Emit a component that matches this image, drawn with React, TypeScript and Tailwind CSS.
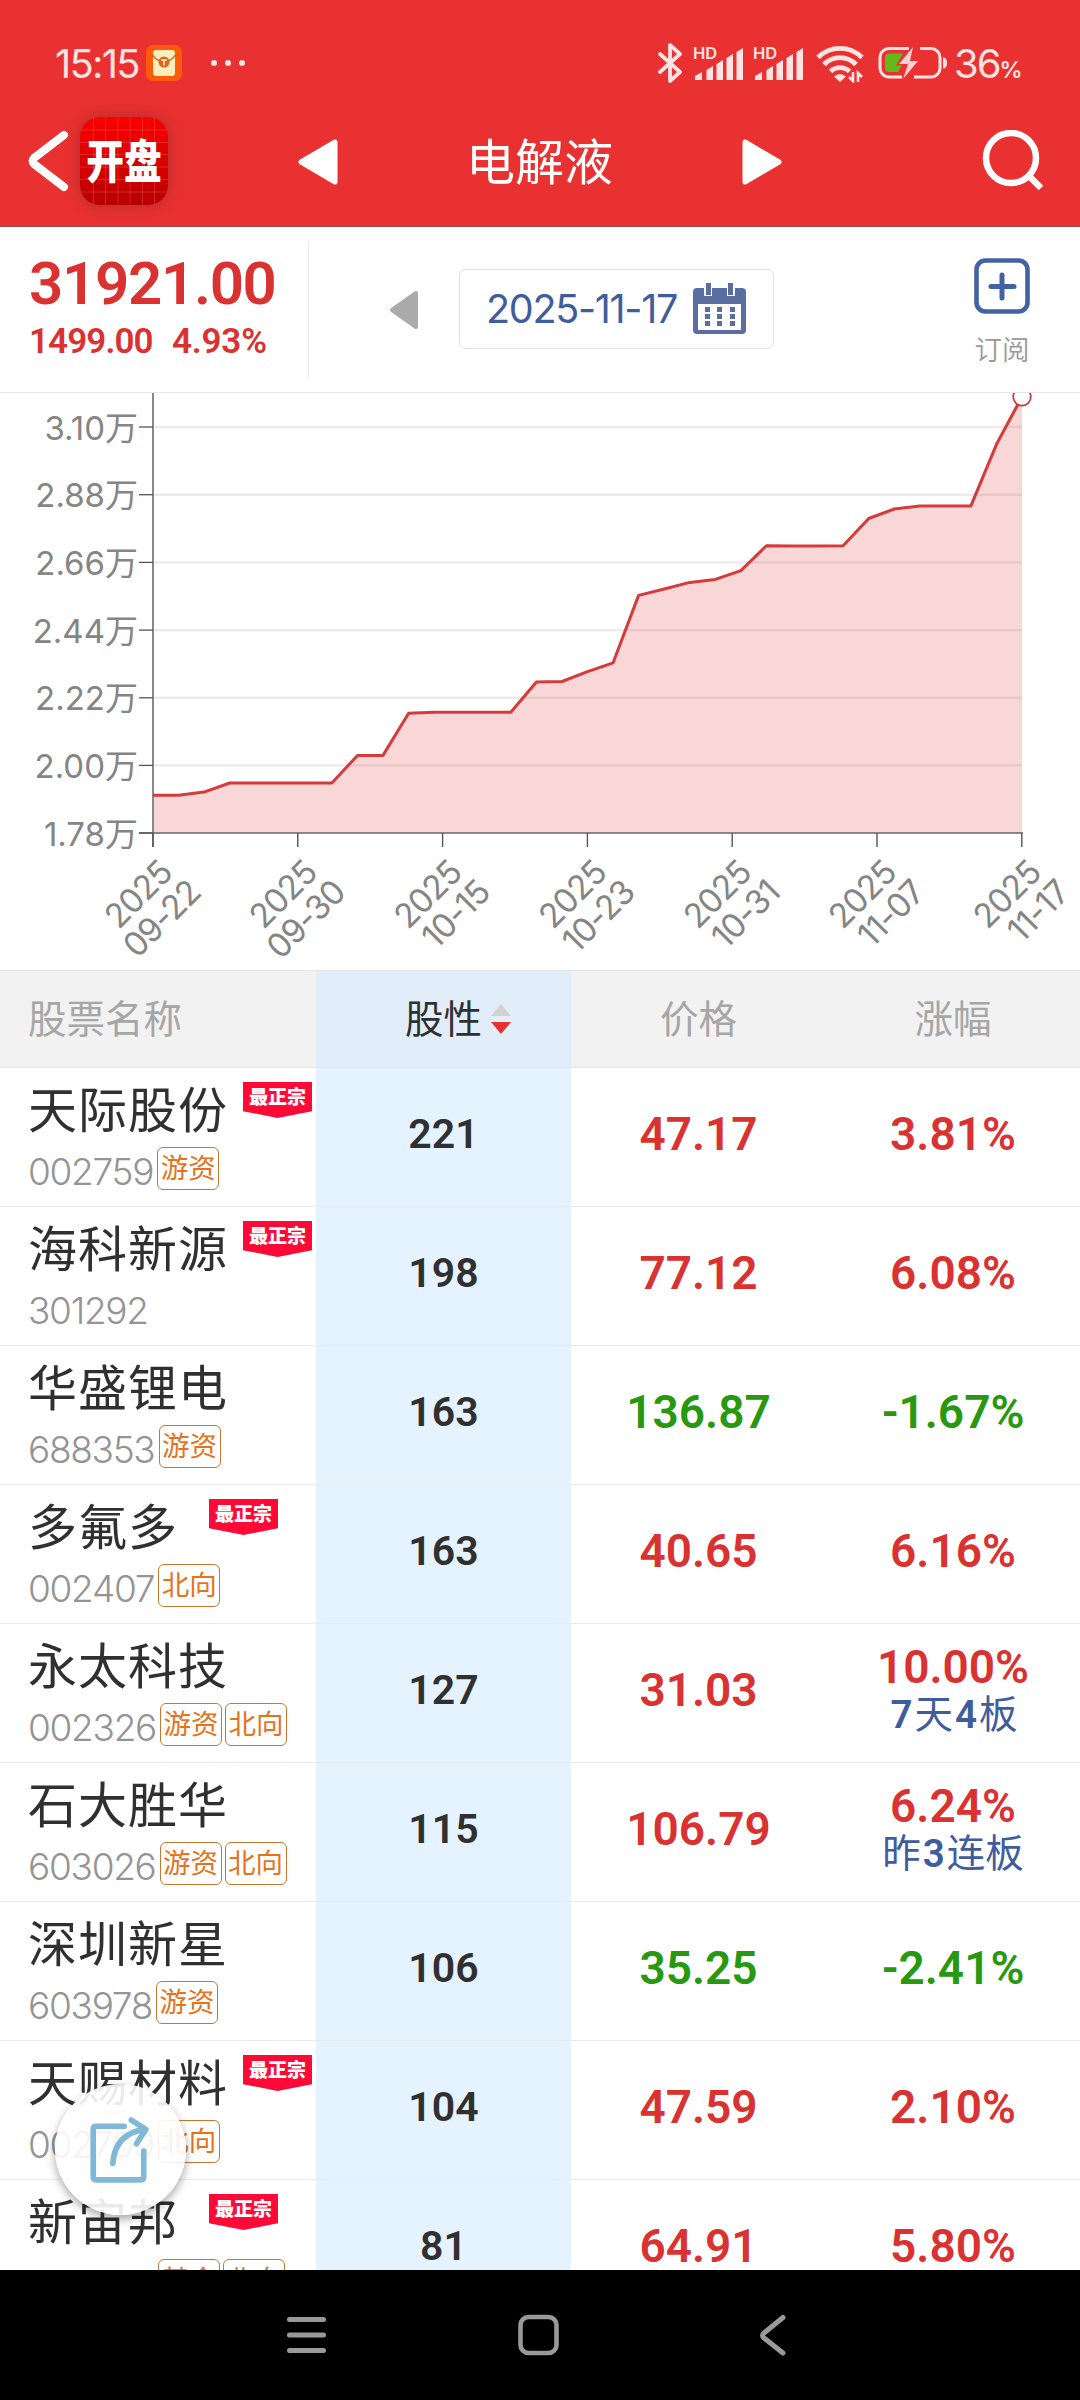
const CJK = "font-['Inter','Noto_Sans_CJK_SC',sans-serif]";
const DIN = "font-['Roboto','Noto_Sans_CJK_SC',sans-serif]";

type Row = {
  name: string;
  code: string;
  tags: string[];
  top?: boolean;
  heat: string;
  price: string;
  change: string;
  note?: string;
};

const rows: Row[] = [
  { name: '天际股份', code: '002759', tags: ['游资'], top: true, heat: '221', price: '47.17', change: '3.81%' },
  { name: '海科新源', code: '301292', tags: [], top: true, heat: '198', price: '77.12', change: '6.08%' },
  { name: '华盛锂电', code: '688353', tags: ['游资'], heat: '163', price: '136.87', change: '-1.67%' },
  { name: '多氟多', code: '002407', tags: ['北向'], top: true, heat: '163', price: '40.65', change: '6.16%' },
  { name: '永太科技', code: '002326', tags: ['游资', '北向'], heat: '127', price: '31.03', change: '10.00%', note: '7天4板' },
  { name: '石大胜华', code: '603026', tags: ['游资', '北向'], heat: '115', price: '106.79', change: '6.24%', note: '昨3连板' },
  { name: '深圳新星', code: '603978', tags: ['游资'], heat: '106', price: '35.25', change: '-2.41%' },
  { name: '天赐材料', code: '002709', tags: ['北向'], top: true, heat: '104', price: '47.59', change: '2.10%' },
  { name: '新宙邦', code: '300037', tags: ['基金', '北向'], top: true, heat: '81', price: '64.91', change: '5.80%' },
];

const series = [
  795.2, 795.2, 792.1, 783, 783, 783, 783, 783, 755.4, 755.4, 713.3, 712.2, 712.2, 712.2, 712.2, 682, 681.5, 671.6,
  662.8, 595.4, 589, 582.4, 579.4, 570.6, 545.7, 545.9, 545.9, 545.7, 518.5, 509, 505.9, 505.9, 505.9, 444.3, 396.8,
];
const yTicks: [string, number][] = [
  ['3.10万', 427], ['2.88万', 494.7], ['2.66万', 562.4], ['2.44万', 630.1], ['2.22万', 697.8], ['2.00万', 765.4], ['1.78万', 833],
];
const xTicks = ['09-22', '09-30', '10-15', '10-23', '10-31', '11-07', '11-17'];

function Chart() {
  const pts = series.map((y, i) => `${(153 + i * 25.56).toFixed(1)},${y}`).join(' ');
  return (
    <svg className="block h-[577px] w-full shrink-0" viewBox="0 393 1080 577">
      {yTicks.slice(0, 6).map(([t, y]) => (
        <line key={t} x1="153" x2="1022" y1={y} y2={y} stroke="#ebebeb" strokeWidth="2.4" />
      ))}
      <polygon points={`153,833 ${pts} 1022,833`} fill="#e33535" fillOpacity="0.2" />
      <line x1="153" x2="153" y1="393" y2="847" stroke="#888" strokeWidth="2" />
      <line x1="139" x2="1023" y1="833" y2="833" stroke="#666" strokeWidth="1.4" />
      {yTicks.map(([t, y]) => (
        <g key={t}>
          <line x1="139" x2="153" y1={y} y2={y} stroke="#555" strokeWidth="1.3" />
          <text x="138" y={y + 12.5} textAnchor="end" className={`${CJK} fill-[#858585] text-[33px] font-[370]`}>{t}</text>
        </g>
      ))}
      {xTicks.map((t, i) => (
        <g key={t}>
          <line x1={153 + i * 144.8} x2={153 + i * 144.8} y1="833" y2="847" stroke="#555" strokeWidth="1.4" />
          <g transform={`translate(${155 + i * 144.8} 833) rotate(-45)`} className={`${CJK} fill-[#858585] text-[33.5px] font-[370] tracking-[-1px]`}>
            <text x="-16" y="43" textAnchor="end">2025</text>
            <text x="-10" y="77" textAnchor="end">{t}</text>
          </g>
        </g>
      ))}
      <polyline points={pts} fill="none" stroke="#d63a3a" strokeWidth="3" strokeLinejoin="round" />
      <circle cx="1022" cy="396.8" r="8.8" fill="#fff" stroke="#d0393c" strokeWidth="1.8" />
    </svg>
  );
}

function Signal() {
  return (
    <svg className="h-[40px] w-[52px] overflow-visible" viewBox="0 0 52 40">
      <text x="0" y="15.5" className="fill-[#ffe3e3] font-['Inter',sans-serif] text-[16.5px] font-semibold">HD</text>
      <g fill="#ffe3e3">
        <path d="M2 37v-4l7-4v8z" />
        <path d="M13.500 37V27l6.500-4v14z" />
        <path d="M23.500 37V21l6.500-4v20z" />
        <path d="M33.500 37V15l6.500-4v26z" />
        <path d="M43.500 37V9l6.500-4v32z" />
      </g>
    </svg>
  );
}

function StatusBar() {
  return (
    <div className="flex h-[96px] items-end justify-between pr-[62px] pl-[55px]">
      <div className="flex h-[66px] items-center">
        <span className={`${CJK} mt-[2px] w-[91px] text-[40px] tracking-[-1.8px] text-[#ffe3e3]`}>15:15</span>
        <svg className="h-[36px] w-[36px]" viewBox="0 0 36 36">
          <rect width="36" height="36" rx="7" fill="#ff5a0a" />
          <rect x="7" y="5" width="22" height="26" rx="3" fill="#ffeebc" />
          <path d="M7 10q2 5 11 7.500 9-2.500 11-7.500" fill="none" stroke="#c2742b" strokeWidth="1.500" />
          <circle cx="18" cy="17" r="5.500" fill="#e0641b" />
          <path d="M15 15h6M18 15v5.500" stroke="#ffeebc" strokeWidth="1.500" />
        </svg>
        <div className="ml-[29px] flex gap-[8px]">
          <i className="size-[6px] rounded-full bg-[#ffe3e3]" />
          <i className="size-[6px] rounded-full bg-[#ffe3e3]" />
          <i className="size-[6px] rounded-full bg-[#ffe3e3]" />
        </div>
      </div>
      <div className="flex h-[66px] items-center">
        <svg className="h-[40px] w-[26px]" viewBox="0 0 26 40">
          <path d="M3 11l20 18-10 9V2l10 9L3 29" fill="none" stroke="#ffe3e3" strokeWidth="3.800" strokeLinejoin="round" strokeLinecap="round" />
        </svg>
        <span className="ml-[10px] flex"><Signal /></span>
        <span className="ml-[8px] flex"><Signal /></span>
        <svg className="ml-[11px] h-[40px] w-[48px]" viewBox="0 0 48 40">
          <g fill="none" stroke="#ffe3e3" strokeWidth="4.800">
            <path d="M2 14.500a31 31 0 0 1 44 0" />
            <path d="M8 21.500a22 22 0 0 1 32 0" />
            <path d="M14.500 28.500a13.500 13.500 0 0 1 19 0" />
          </g>
          <path d="M18 33.500q6-5 12 0l-6 5.500z" fill="#ffe3e3" />
          <path d="M37 29v9l-4-4M42 39v-9l4 4" fill="none" stroke="#ffe3e3" strokeWidth="2.600" />
        </svg>
        <svg className="ml-[14px] h-[40px] w-[70px]" viewBox="0 0 70 40">
          <path d="M31 5.500H11A9 9 0 0 0 2 14v11a9 9 0 0 0 9 9h13M42 5.500h11a9 9 0 0 1 9 9V25a9 9 0 0 1-9 9H36" fill="none" stroke="#ffe3e3" strokeWidth="3" />
          <path d="M11 10.500h14l-7 12h6l-4 6.500H11a4 4 0 0 1-4-4V14.500a4 4 0 0 1 4-4z" fill="#63b81c" />
          <path d="M35 4L21 21h9l-5 15 15-18h-8z" fill="#ffd0d0" />
          <path d="M65 14.500q4 0 4 5.500t-4 5.500z" fill="#ffe3e3" />
        </svg>
        <span className={`${CJK} mt-[2px] ml-[6px] w-[64px] text-[40px] tracking-[-2px] whitespace-nowrap text-[#ffe3e3]`}>
          36<span className="text-[23px] font-semibold">%</span>
        </span>
      </div>
    </div>
  );
}

function TitleBar() {
  return (
    <div className="flex h-[130px] items-start">
      <svg className="mt-[32px] ml-[26px] h-[66px] w-[46px]" viewBox="0 0 46 66">
        <path d="M38 7L8 30q-3 3 0 6l30 23" fill="none" stroke="#fff" strokeWidth="8" strokeLinecap="round" strokeLinejoin="round" />
      </svg>
      <div className="relative mt-[21px] ml-[8px] flex h-[88px] w-[88px] items-center justify-center overflow-hidden rounded-[20px] bg-linear-to-b from-[#fb0000] to-[#b80000] shadow-[0_0_14px_rgba(120,40,40,.5)]">
        <svg className="absolute inset-0 size-full" viewBox="0 0 88 88">
          <path d="M13.500 0v88M25.500 0v88M38 0v88M50 0v88M62.500 0v88M74.500 0v88M0 13h88M0 25.500h88M0 37.500h88M0 50h88M0 62.500h88M0 75h88" stroke="#ff8080" strokeOpacity=".28" />
        </svg>
        <span className={`${CJK} relative scale-x-[.82] text-[46px] leading-none font-black whitespace-nowrap text-white`}>开盘</span>
      </div>
      <svg className="mt-[42px] ml-[130px] h-[48px] w-[41px]" viewBox="0 0 41 48">
        <path d="M3 24L37 4v40z" fill="#fff" stroke="#fff" strokeWidth="5" strokeLinejoin="round" />
      </svg>
      <span className={`${CJK} mt-[34px] ml-[127px] w-[149px] text-[49px] leading-[66px] font-[370] whitespace-nowrap text-white`}>电解液</span>
      <svg className="mt-[42px] ml-[126px] h-[48px] w-[41px]" viewBox="0 0 41 48">
        <path d="M38 24L4 4v40z" fill="#fff" stroke="#fff" strokeWidth="5" strokeLinejoin="round" />
      </svg>
      <svg className="mt-[34px] ml-[200px] h-[62px] w-[64px]" viewBox="0 0 64 62">
        <circle cx="29" cy="28" r="25" fill="none" stroke="#fff" strokeWidth="6.500" />
        <path d="M46 45l13 13" stroke="#fff" strokeWidth="6.500" />
      </svg>
    </div>
  );
}

function InfoBar() {
  return (
    <div className="flex h-[166px] shrink-0 border-b border-[#e6e6e6] bg-white">
      <div className={`${DIN} mt-[14px] h-[137px] w-[309px] border-r border-[#ebebeb] pl-[29px] font-semibold whitespace-nowrap text-[#da3131]`}>
        <div className="mt-[11px] text-[60px] leading-[64px] tracking-[-1.300px]">31921.00</div>
        <div className="mt-[6px] flex text-[35px] leading-[40px] tracking-[-.9px]">
          <span className="w-[143px]">1499.00</span>
          <span className="tracking-[-.2px]">4.93%</span>
        </div>
      </div>
      <svg className="mt-[63px] ml-[80px] h-[40px] w-[30px]" viewBox="0 0 30 40">
        <path d="M3 20L27 3v34z" fill="#ababab" stroke="#ababab" strokeWidth="4" strokeLinejoin="round" />
      </svg>
      <div className="mt-[42px] ml-[40px] flex h-[80px] w-[315px] items-center rounded-[6px] border border-[#e2e2e2] pl-[26px]">
        <span className={`${CJK} mt-[2px] w-[207px] text-[39.500px] tracking-[-1.300px] whitespace-nowrap text-[#3f5d9d]`}>2025-11-17</span>
        <svg className="mb-[1px] h-[52px] w-[53px]" viewBox="0 0 53 52">
          <path d="M0 9q0-4 4-4h7v8h8V5h15v8h8V5h7q4 0 4 4v38q0 4-4 4H4q-4 0-4-4z" fill="#5b6ea1" />
          <path d="M13 0h5v12h-5zM35 0h5v12h-5z" fill="#5b6ea1" />
          <path d="M5 21h43v26H5z" fill="#fff" />
          <path d="M12 24h5v5h-5zM24 24h5v5h-5zM37 24h5v5h-5zM12 31h5v5h-5zM24 31h5v5h-5zM37 31h5v5h-5zM12 38h5v5h-5zM24 38h5v5h-5zM37 38h5v5h-5z" fill="#5b6ea1" />
        </svg>
      </div>
      <div className="mt-[31px] ml-[200px] flex w-[56px] flex-col items-center">
        <svg className="h-[56px] w-[56px]" viewBox="0 0 56 56">
          <rect x="2.500" y="2.500" width="51" height="51" rx="9" fill="none" stroke="#4362a3" strokeWidth="4.600" />
          <path d="M28 17v23M17 28.500h23" stroke="#4362a3" strokeWidth="5" strokeLinecap="round" />
        </svg>
        <span className={`${CJK} mt-[18px] text-[27.500px] leading-[36px] font-[350] whitespace-nowrap text-[#999]`}>订阅</span>
      </div>
    </div>
  );
}

function TopBadge() {
  return (
    <div className="mt-[14px] flex h-[36px] w-[69px] justify-center bg-[#ff0a37] pt-[5px] [clip-path:polygon(0_0,100%_0,100%_81%,50%_100%,0_81%)]">
      <span className={`${CJK} text-[19px] leading-[22px] font-black whitespace-nowrap text-white`}>最正宗</span>
    </div>
  );
}

function StockRow({ r }: { r: Row }) {
  const tone = r.change.startsWith('-') ? 'text-[#289810]' : 'text-[#da3131]';
  return (
    <div className={`${DIN} grid h-[139px] shrink-0 grid-cols-[316px_255px_255px_254px] border-b border-[#e9eaeb] text-[46px] leading-[50px] font-semibold`}>
      <div className={`${CJK} pl-[28px] font-[370] whitespace-nowrap`}>
        <div className="flex h-[76px] justify-between pr-[4px]">
          <span className="mt-[13px] text-[49px] leading-[60px] tracking-[1px] text-[#303030]">{r.name}</span>
          {r.top && <span className={r.name.length === 3 ? 'mr-[34px]' : ''}><TopBadge /></span>}
        </div>
        <div className="flex h-[50px] items-center">
          <span className="mt-[5px] mr-[4px] text-[37px] font-light tracking-[-1.300px] text-[#949494]">{r.code}</span>
          {r.tags.map((t) => (
            <span key={t} className="mr-[3px] mb-[1px] flex h-[43px] w-[62px] items-center justify-center rounded-[6px] border border-[#c8782e] text-[27.500px] leading-none font-normal text-[#e6721c]">{t}</span>
          ))}
        </div>
      </div>
      <div className="flex items-center justify-center bg-[#e5f2ff] pb-[6px] text-[41px] text-[#303030]">{r.heat}</div>
      <div className={`flex items-center justify-center pb-[6px] ${tone}`}>{r.price}</div>
      <div className={`flex flex-col items-center justify-center pb-[6px] ${tone}`}>
        <span>{r.change}</span>
        {r.note && (
          <span className="text-[38.500px] leading-[46px] font-[370] text-[#3f5d9d]">
            {r.note.split('').map((ch, i) => (
              <span key={i} className={/\d/.test(ch) ? 'px-[2px] font-semibold' : ''}>{ch}</span>
            ))}
          </span>
        )}
      </div>
    </div>
  );
}

export default function App() {
  return (
    <div className={`${CJK} relative flex h-[2400px] w-[1080px] flex-col overflow-hidden bg-white`}>
      <header className="h-[227px] shrink-0 border-b border-[#a84a45] bg-[#e93131]">
        <StatusBar />
        <TitleBar />
      </header>
      <InfoBar />
      <Chart />
      <div className="grid h-[98px] shrink-0 grid-cols-[316px_255px_255px_254px] border-y border-[#e6e6e6] bg-[#f2f2f2] text-[38.500px] font-[370] text-[#a6a6a6]">
        <div className="flex items-center pt-[1px] pl-[28px]">股票名称</div>
        <div className="flex items-center bg-[#e1edf8] pt-[1px] pl-[89px] text-[#303030]">
          股性
          <svg className="mb-[1px] ml-[8px] h-[32px] w-[22px]" viewBox="0 0 22 32">
            <path d="M11 1l10 12H1z" fill="#d2d2d2" />
            <path d="M11 31L1 19h20z" fill="#e93131" />
          </svg>
        </div>
        <div className="flex items-center justify-center pt-[1px]">价格</div>
        <div className="flex items-center justify-center pt-[1px]">涨幅</div>
      </div>
      <main className="flex h-[1202px] shrink-0 flex-col overflow-hidden">
        {rows.map((r) => <StockRow key={r.code} r={r} />)}
      </main>
      <nav className="flex h-[130px] shrink-0 items-center bg-black">
        <svg className="ml-[286px] h-[44px] w-[41px]" viewBox="0 0 41 44">
          <path d="M3.500 6.500h34M3.500 22h34M3.500 37.500h34" stroke="#999" strokeWidth="5" strokeLinecap="round" />
        </svg>
        <svg className="ml-[190px] h-[44px] w-[44px]" viewBox="0 0 44 44">
          <rect x="3.500" y="4" width="36" height="36" rx="8" fill="none" stroke="#999" strokeWidth="4.600" />
        </svg>
        <svg className="ml-[197px] h-[44px] w-[30px]" viewBox="0 0 30 44">
          <path d="M25 4.500L6 20q-3 2.500 0 5l19 15" fill="none" stroke="#999" strokeWidth="5" strokeLinecap="round" strokeLinejoin="round" />
        </svg>
      </nav>
      <button className="absolute top-[2084px] left-[55px] flex size-[131px] items-center justify-center rounded-full bg-white/90 pr-[3px] shadow-[0_4px_10px_rgba(0,0,0,.35)]">
        <svg className="h-[66px] w-[62px]" viewBox="0 0 60 64">
          <g fill="none" stroke="#80b9d8" strokeWidth="5.500" strokeLinecap="round" strokeLinejoin="round">
            <path d="M35 9H8q-3 0-3 3v46q0 3 3 3h43q3 0 3-3V33" />
            <path d="M24 45Q26 16 55 12M42 3l14 9-9 14" />
          </g>
        </svg>
      </button>
    </div>
  );
}
